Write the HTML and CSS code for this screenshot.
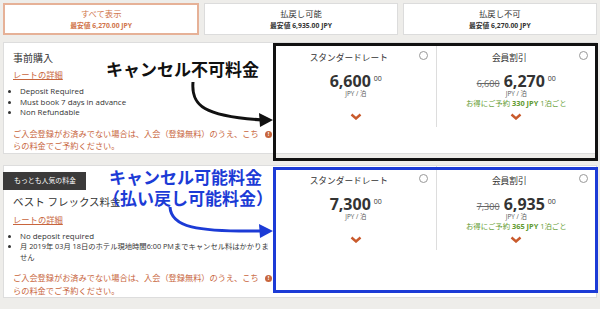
FILE: index.html
```html
<!DOCTYPE html>
<html>
<head>
    <title>料金プラン</title>
    <link rel="stylesheet" href="styles.css">
</head>
<body>
    <div class="tabs">
        <div class="tab tab-active">
            <div class="tab-title">すべて表示</div>
            <div class="tab-price">最安値 6,270.00 JPY</div>
        </div>
        <div class="tab">
            <div class="tab-title">払戻し可能</div>
            <div class="tab-price">最安値 6,935.00 JPY</div>
        </div>
        <div class="tab">
            <div class="tab-title">払戻し不可</div>
            <div class="tab-price">最安値 6,270.00 JPY</div>
        </div>
    </div>

    <!-- 事前購入 -->
    <div class="rate rate-first">
        <div class="rate-info">
            <div class="rate-name">事前購入</div>
            <a class="rate-link" href="#">レートの詳細</a>
            <ul class="rate-terms">
                <li>Deposit Required</li>
                <li>Must book 7 days in advance</li>
                <li>Non Refundable</li>
            </ul>
            <div class="rate-note">
                <p>ご入会登録がお済みでない場合は、入会（登録無料）のうえ、こちらの料金でご予約ください。</p>
                <span class="info-icon">!</span>
            </div>
        </div>
        <div class="rate-options">
            <div class="option">
                <span class="radio"></span>
                <div class="option-title">スタンダードレート</div>
                <div class="price">6,600<sup>00</sup></div>
                <div class="unit">JPY / 泊</div>
                <div class="saving">&nbsp;</div>
                <svg class="chevron" width="12" height="7" viewBox="0 0 12 7"><polyline points="1.5,1.5 6,5.5 10.5,1.5" fill="none" stroke="#c95a2c" stroke-width="2.4"/></svg>
            </div>
            <div class="option">
                <span class="radio"></span>
                <div class="option-title">会員割引</div>
                <div class="price"><s class="old-price">6,600</s> 6,270<sup>00</sup></div>
                <div class="unit">JPY / 泊</div>
                <div class="saving">お得にご予約 <b>330 JPY</b> 1泊ごと</div>
                <svg class="chevron" width="12" height="7" viewBox="0 0 12 7"><polyline points="1.5,1.5 6,5.5 10.5,1.5" fill="none" stroke="#c95a2c" stroke-width="2.4"/></svg>
            </div>
        </div>
    </div>

    <!-- ベスト フレックス料金 -->
    <div class="rate rate-second">
        <div class="rate-info">
            <div class="badge">もっとも人気の料金</div>
            <div class="rate-name rate-name-big">ベスト フレックス料金</div>
            <a class="rate-link" href="#">レートの詳細</a>
            <ul class="rate-terms">
                <li>No deposit required</li>
                <li class="term-long">月 2019年 03月 18日のホテル現地時間6:00 PMまでキャンセル料はかかりません</li>
            </ul>
            <div class="rate-note">
                <p>ご入会登録がお済みでない場合は、入会（登録無料）のうえ、こちらの料金でご予約ください。</p>
                <span class="info-icon">!</span>
            </div>
        </div>
        <div class="rate-options">
            <div class="option">
                <span class="radio"></span>
                <div class="option-title">スタンダードレート</div>
                <div class="price">7,300<sup>00</sup></div>
                <div class="unit">JPY / 泊</div>
                <div class="saving">&nbsp;</div>
                <svg class="chevron" width="12" height="7" viewBox="0 0 12 7"><polyline points="1.5,1.5 6,5.5 10.5,1.5" fill="none" stroke="#c95a2c" stroke-width="2.4"/></svg>
            </div>
            <div class="option">
                <span class="radio"></span>
                <div class="option-title">会員割引</div>
                <div class="price"><s class="old-price">7,300</s> 6,935<sup>00</sup></div>
                <div class="unit">JPY / 泊</div>
                <div class="saving">お得にご予約 <b>365 JPY</b> 1泊ごと</div>
                <svg class="chevron" width="12" height="7" viewBox="0 0 12 7"><polyline points="1.5,1.5 6,5.5 10.5,1.5" fill="none" stroke="#c95a2c" stroke-width="2.4"/></svg>
            </div>
        </div>
    </div>

    <!-- annotations drawn over the screenshot -->
    <div class="mark mark-black"></div>
    <div class="mark mark-blue"></div>
    <div class="note-label label-black">キャンセル不可料金</div>
    <div class="note-label label-blue">
        <div>キャンセル可能料金</div>
        <div class="label-paren">（払い戻し可能料金）</div>
    </div>
    <svg class="arrows" width="600" height="309" viewBox="0 0 600 309">
        <path d="M193,82 C191,106 204,116 262,120" fill="none" stroke="#111" stroke-width="3"/>
        <polygon points="273,120 259,113 260,127" fill="#111"/>
        <path d="M170,207 C171,227 196,232 262,231" fill="none" stroke="#1c3bd6" stroke-width="3"/>
        <polygon points="273,231 259,224 260,238" fill="#1c3bd6"/>
    </svg>
</body>
</html>
```

FILE: styles.css
```css
* {
    box-sizing: border-box;
}
body {
    margin: 0;
    width: 600px;
    height: 309px;
    overflow: hidden;
    position: relative;
    background-color: #eeedea;
    font-family: "Open Sans", "Noto Sans CJK JP", sans-serif;
    color: #333;
}
.tabs {
    display: flex;
    gap: 4.5px;
    padding: 3px 3px 0;
}
.tab {
    flex: 1;
    height: 32px;
    padding-top: 4px;
    background-color: #fff;
    border: 1px solid #dcdcdc;
    text-align: center;
}
.tab-active {
    padding-top: 3px;
    border: 2px solid #e6b197;
    color: #d0744a;
}
.tab-title {
    font-size: 8.3px;
    line-height: 12px;
}
.tab-price {
    font-size: 6.8px;
    font-weight: 700;
    line-height: 11px;
}

.rate {
    display: flex;
    align-items: flex-start;
    margin: 0 3px;
    background-color: #fff;
    border: 1px solid #ddd;
}
.rate-first {
    margin-top: 7px;
}
.rate-second {
    margin-top: 11px;
}
.rate-info {
    width: 272px;
    align-self: stretch;
    padding: 8px 4px 0 9px;
    font-size: 8px;
    line-height: 12px;
}
.rate-name {
    font-size: 10px;
    line-height: 14px;
}
.rate-name-big {
    margin-top: 4px;
    font-size: 10.5px;
    line-height: 16px;
}
.rate-link {
    display: block;
    width: max-content;
    margin-top: 4px;
    font-size: 8.3px;
    line-height: 12px;
    color: #c8653c;
}
.rate-terms {
    margin: 5px 0 0;
    padding-left: 7px;
    font-size: 7.9px;
    line-height: 10.5px;
    color: #333;
}
.term-long {
    font-size: 7.3px;
}
.rate-note {
    display: flex;
    align-items: flex-start;
    margin-top: 10px;
}
.rate-note p {
    width: 250px;
    margin: 0;
    font-size: 8.2px;
    line-height: 12.5px;
    color: #c8653c;
}
.info-icon {
    width: 7px;
    height: 7px;
    margin: 3px 0 0 auto;
    border-radius: 50%;
    background-color: #c8653c;
    color: #fff;
    font-size: 5.5px;
    font-weight: 700;
    line-height: 7px;
    text-align: center;
}
.badge {
    display: block;
    width: max-content;
    margin: -2px 0 0 -10px;
    padding: 0 10px 0 11px;
    height: 18px;
    background-color: #3b3a3a;
    color: #fff;
    font-size: 6.9px;
    line-height: 18px;
}

.rate-options {
    display: flex;
    width: 320px;
}
.option {
    position: relative;
    flex: 1;
    padding: 8px 0 7px;
    text-align: center;
}
.option + .option {
    border-left: 1px solid #ddd;
}
.radio {
    position: absolute;
    top: 8px;
    right: 8px;
    width: 9px;
    height: 9px;
    border: 1px solid #999;
    border-radius: 50%;
}
.option-title {
    padding-right: 14px;
    font-size: 8.7px;
    line-height: 14px;
    color: #333;
}
.price {
    margin-top: 8px;
    font-size: 16px;
    font-weight: 700;
    line-height: 16px;
    color: #333;
}
.price sup {
    margin-left: 3px;
    font-size: 7px;
    font-weight: 400;
    line-height: 0;
    vertical-align: 6px;
}
.old-price {
    font-size: 9px;
    font-weight: 400;
    line-height: 0;
    color: #666;
}
.unit {
    font-size: 6.3px;
    line-height: 9px;
    color: #555;
}
.saving {
    font-size: 7.4px;
    line-height: 11px;
    color: #5f9a2e;
}
.saving b {
    font-weight: 700;
}
.chevron {
    display: block;
    margin: 4px auto 0;
}

.mark {
    position: absolute;
    left: 273px;
    width: 325px;
    border: 3px solid #111;
}
.mark-black {
    top: 43px;
    height: 118px;
}
.mark-blue {
    top: 167px;
    height: 126px;
    border-color: #1c3bd6;
}
.note-label {
    position: absolute;
    font-family: "Noto Sans CJK JP", sans-serif;
    font-weight: 700;
    font-size: 17px;
    white-space: nowrap;
}
.label-black {
    left: 106px;
    top: 57px;
    line-height: 24px;
    color: #111;
}
.label-blue {
    left: 109px;
    top: 166px;
    line-height: 21px;
    color: #1c3bd6;
}
.label-paren {
    margin-left: -6px;
}
.arrows {
    position: absolute;
    left: 0;
    top: 0;
}
```
